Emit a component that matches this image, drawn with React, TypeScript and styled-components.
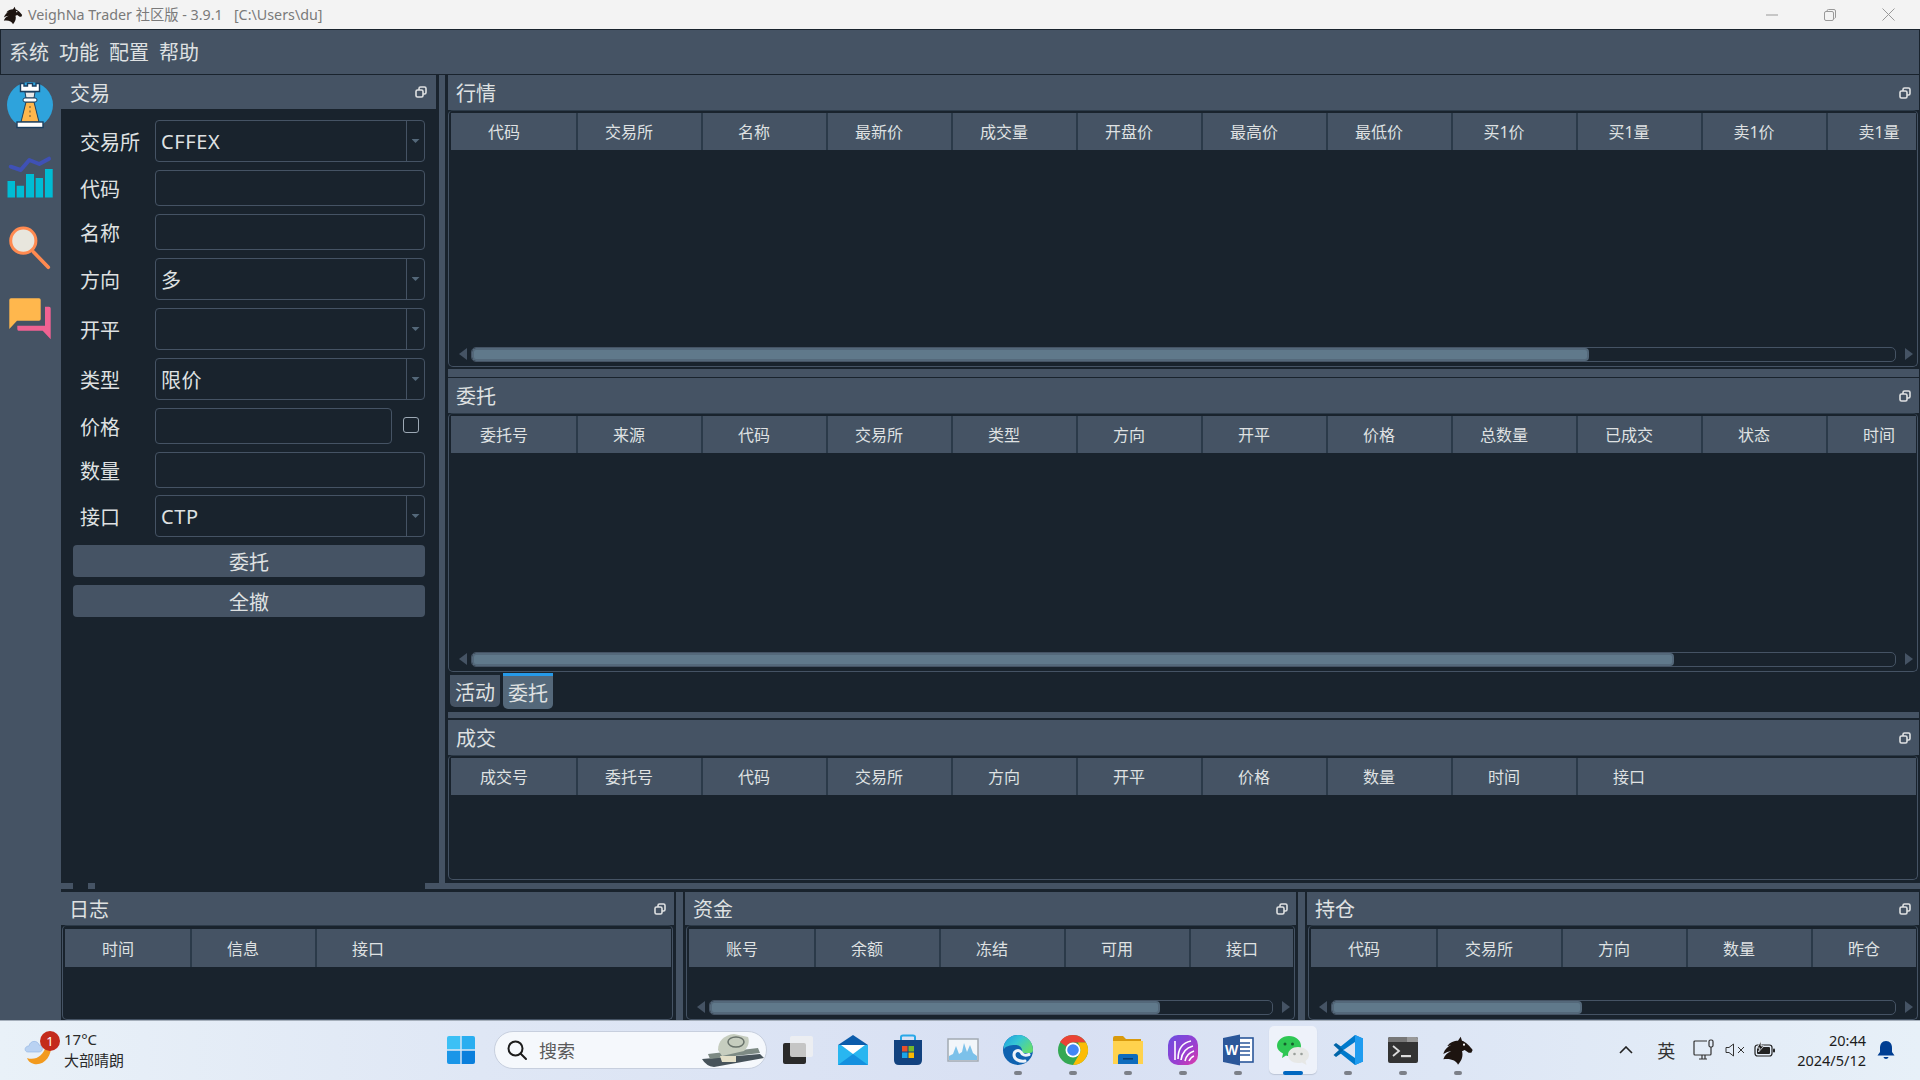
import { FC, ReactNode } from 'react';
import styled, { createGlobalStyle } from 'styled-components';

const colors = {
  dark: '#19232d',
  panel: '#455364',
  mid: '#54687a',
  thumb: '#60798b',
  text: '#dfe1e2',
  accent: '#259ae9',
};

const GlobalStyle = createGlobalStyle`
  html, body {
    margin: 0;
    padding: 0;
    background: ${colors.dark};
    overflow: hidden;
  }
  * {
    box-sizing: border-box;
  }
`;

const Page = styled.div`
  width: 1920px;
  height: 1080px;
  display: flex;
  flex-direction: column;
  overflow: hidden;
  font-family: 'Noto Sans', 'Noto Sans CJK SC', sans-serif;
  color: ${colors.text};
`;

/* window title */
const TitleBar = styled.div`
  flex: 0 0 29px;
  display: flex;
  align-items: center;
  background: #f3f3f3;
  padding-left: 3px;
  color: #7a7a7a;
  font-size: 14.3px;
`;

const TitleText = styled.span`
  margin: 0 0 2px 5px;
  white-space: pre;
`;

const WindowButtons = styled.div`
  margin-left: auto;
  display: flex;
  padding-right: 3px;
`;

const WindowButton = styled.div`
  width: 58px;
  height: 29px;
  display: flex;
  align-items: center;
  justify-content: center;
`;

/* menu */
const MenuBar = styled.div`
  flex: 0 0 46px;
  display: flex;
  align-items: center;
  gap: 10px;
  padding: 0 0 2px 8px;
  background: ${colors.panel};
  border: 1px solid ${colors.dark};
  font-size: 20px;
`;

const Body = styled.div`
  flex: 1;
  display: flex;
  min-height: 0;
`;

const ToolBar = styled.div`
  flex: 0 0 61px;
  display: flex;
  flex-direction: column;
  align-items: center;
  gap: 23px;
  padding: 6px 1px 0 0;
  background: ${colors.panel};
`;

const ToolButton = styled.div`
  width: 48px;
  height: 48px;
`;

const Center = styled.div`
  flex: 1;
  display: flex;
  flex-direction: column;
  min-width: 0;
`;

const TopRow = styled.div`
  flex: 1;
  display: flex;
  min-height: 0;
`;

const OrderDock = styled.div`
  flex: 0 0 375px;
  display: flex;
  flex-direction: column;
`;

const VSplit = styled.div`
  flex: 0 0 12px;
  border-left: 3px solid ${colors.dark};
  border-right: 3px solid ${colors.dark};
  background: ${colors.panel};
`;

const BottomVSplit = styled.div`
  flex: 0 0 11px;
  border-left: 2px solid ${colors.dark};
  border-right: 2px solid ${colors.dark};
  background: ${colors.panel};
`;

const RightColumn = styled.div`
  flex: 1;
  display: flex;
  flex-direction: column;
  min-width: 0;
  padding-right: 1px;
`;

const HSplit = styled.div<{ $top: number; $bottom: number }>`
  flex: 0 0 auto;
  height: 6px;
  margin-top: ${(p) => p.$top}px;
  margin-bottom: ${(p) => p.$bottom}px;
  background: ${colors.panel};
`;

const HSplitTall = styled(HSplit)`
  height: 8px;
`;

const MainHSplit = styled.div`
  flex: 0 0 6px;
  margin-bottom: 3px;
  background: linear-gradient(
    to right,
    ${colors.panel} 0 12px,
    ${colors.dark} 12px 27px,
    ${colors.panel} 27px 34px,
    ${colors.dark} 34px 364px,
    ${colors.panel} 364px
  );
`;

const BottomRow = styled.div`
  flex: 0 0 128px;
  display: flex;
`;

const DockRoot = styled.div<{ $height?: number; $width?: number }>`
  display: flex;
  flex-direction: column;
  min-width: 0;
  ${(p) => (p.$height ? `flex: 0 0 ${p.$height}px;` : '')}
  ${(p) => (p.$width ? `flex: 0 0 ${p.$width}px;` : '')}
`;

const DockTitle = styled.div<{ $height: number }>`
  flex: 0 0 ${(p) => p.$height}px;
  display: flex;
  align-items: center;
  justify-content: space-between;
  padding: 0 8px;
  background: ${colors.panel};
  font-size: 20px;
`;

const OrderTitle = styled(DockTitle)`
  padding: 0 9px;
`;

const DockFrame = styled.div<{ $inset: boolean }>`
  flex: 1;
  display: flex;
  flex-direction: column;
  min-height: 0;
  margin: ${(p) => (p.$inset ? '0 1px' : '0 1px 0 0')};
  padding: ${(p) => (p.$inset ? '3px' : '2px')} 1px 0 2px;
  border: 1px solid ${colors.panel};
  border-top-color: #2c3a48;
  border-radius: 5px;
  background: ${colors.dark};
`;

const TableHeader = styled.div<{ $height: number }>`
  flex: 0 0 ${(p) => p.$height}px;
  display: flex;
  overflow: hidden;
  padding-left: 2px;
  background: ${colors.panel};
  font-size: 16px;
`;

const HeaderCell = styled.div`
  flex: 0 0 125px;
  display: flex;
  align-items: center;
  justify-content: center;
  padding: 0 21px 1px 0;
  border-right: 2px solid #2b3a49;
  &:last-child {
    border-right-color: transparent;
  }
`;

const TableBody = styled.div`
  flex: 1;
`;

const ScrollRow = styled.div`
  flex: 0 0 20px;
  display: flex;
  align-items: center;
  margin-bottom: 2px;
  padding: 0 3px 0 8px;
`;

const Arrow = styled.div<{ $dir: 'left' | 'right' }>`
  flex: 0 0 8px;
  height: 12px;
  background: ${colors.panel};
  clip-path: ${(p) =>
    p.$dir === 'left' ? 'polygon(100% 0, 0 50%, 100% 100%)' : 'polygon(0 0, 100% 50%, 0 100%)'};
`;

const Track = styled.div`
  flex: 1;
  height: 15px;
  margin: 0 9px 0 4px;
  border: 1px solid ${colors.panel};
  border-radius: 5px;
  overflow: hidden;
`;

const Thumb = styled.div<{ $width: number }>`
  width: ${(p) => p.$width}%;
  height: 100%;
  border: 2px solid ${colors.mid};
  border-radius: 4px;
  background: ${colors.thumb};
`;

/* order form */
const Form = styled.div`
  flex: 1;
  display: flex;
  flex-direction: column;
  gap: 8px;
  padding: 11px 11px 0 12px;
`;

const FormRow = styled.div<{ $height: number; $pull?: boolean }>`
  flex: 0 0 ${(p) => p.$height}px;
  display: flex;
  align-items: center;
  margin-top: ${(p) => (p.$pull ? -1 : 0)}px;
`;

const Label = styled.div`
  flex: 0 0 82px;
  padding-left: 7px;
  font-size: 20px;
`;

const Field = styled.div`
  flex: 1;
  height: 100%;
  display: flex;
  align-items: center;
  padding-left: 5px;
  border: 1px solid ${colors.panel};
  border-radius: 4px;
  font-size: 20px;
  letter-spacing: 0.6px;
`;

const ComboArrow = styled.div`
  margin-left: auto;
  flex: 0 0 18px;
  height: 100%;
  display: flex;
  align-items: center;
  justify-content: center;
  border-left: 1px solid ${colors.panel};
  &::after {
    content: '';
    width: 8px;
    height: 4px;
    background: ${colors.mid};
    clip-path: polygon(0 0, 100% 0, 50% 100%);
  }
`;

const CheckBox = styled.div`
  flex: 0 0 16px;
  height: 16px;
  margin: 0 6px 2px 11px;
  border: 1px solid #9da9b5;
  border-radius: 3px;
`;

const ActionButton = styled.div<{ $height: number }>`
  flex: 0 0 ${(p) => p.$height}px;
  display: flex;
  align-items: center;
  justify-content: center;
  border-radius: 4px;
  background: ${colors.panel};
  font-size: 20px;
`;

/* tabs between the order and trade docks */
const TabBar = styled.div`
  flex: 0 0 40px;
  display: flex;
  align-items: flex-start;
  gap: 3px;
  padding-left: 2px;
`;

const Tab = styled.div<{ $active?: boolean }>`
  width: 50px;
  height: ${(p) => (p.$active ? 36 : 32)}px;
  margin-top: ${(p) => (p.$active ? 1 : 3)}px;
  display: flex;
  align-items: center;
  justify-content: center;
  border-top: ${(p) => (p.$active ? `3px solid ${colors.accent}` : 'none')};
  border-radius: 0 0 5px 5px;
  background: ${(p) => (p.$active ? colors.mid : colors.panel)};
  font-size: 20px;
`;

/* taskbar */
const TaskBar = styled.div`
  flex: 0 0 60px;
  display: flex;
  align-items: center;
  padding-bottom: 2px;
  border-top: 1px solid #a5afbb;
  background: linear-gradient(to right, #e9f1f8 0%, #dfe7f5 25%, #d8e0f3 55%, #dde6f5 75%, #e7f0f8 100%);
  color: #1c1c1c;
`;

const Weather = styled.div`
  flex: 0 0 437px;
  display: flex;
  align-items: center;
  padding-left: 24px;
`;

const WeatherIcon = styled.div`
  position: relative;
  width: 30px;
  height: 40px;
  display: flex;
  align-items: flex-end;
`;

const Badge = styled.div`
  position: absolute;
  top: 1px;
  right: -6px;
  width: 20px;
  height: 20px;
  display: flex;
  align-items: center;
  justify-content: center;
  border-radius: 50%;
  background: #c42b1c;
  color: #fff;
  font-size: 13px;
`;

const WeatherText = styled.div`
  margin-left: 10px;
  font-size: 15px;
  line-height: 21px;
  color: #2a2a2a;
`;

const Apps = styled.div`
  display: flex;
  align-items: center;
  gap: 7px;
`;

const SearchBox = styled.div`
  width: 273px;
  height: 38px;
  margin: 0 0 0 2px;
  display: flex;
  align-items: center;
  padding-left: 11px;
  border: 1px solid #c7cfde;
  border-radius: 19px;
  background: #f5f8fc;
  color: #5a5a5a;
  font-size: 18px;
`;

const SearchLabel = styled.span`
  margin-left: 11px;
`;

const SearchArt = styled.div`
  margin-left: auto;
  display: flex;
`;

const AppButton = styled.div<{ $active?: boolean }>`
  position: relative;
  flex: 0 0 48px;
  height: 48px;
  display: flex;
  align-items: center;
  justify-content: center;
  border-radius: 5px;
  background: ${(p) => (p.$active ? '#eef2fa' : 'transparent')};
  box-shadow: ${(p) => (p.$active ? '0 1px 1px #bcc5d6' : 'none')};
`;

const RunDot = styled.div<{ $active?: boolean }>`
  position: absolute;
  bottom: -1px;
  left: 50%;
  width: ${(p) => (p.$active ? 20 : 8)}px;
  height: 4px;
  transform: translateX(-50%);
  border-radius: 2px;
  background: ${(p) => (p.$active ? '#0067c0' : '#7c8088')};
`;

const Tray = styled.div`
  margin-left: auto;
  display: flex;
  align-items: center;
  padding-right: 25px;
`;

const TrayItem = styled.div<{ $width: number }>`
  flex: 0 0 ${(p) => p.$width}px;
  display: flex;
  justify-content: center;
  font-size: 18px;
  color: #333;
`;

const Clock = styled.div`
  margin: 0 11px 0 15px;
  text-align: right;
  font-size: 14.5px;
  line-height: 20px;
  color: #1c1c1c;
`;

/* drawings */
const FloatIcon = () => (
  <svg width="12" height="12" viewBox="0 0 12 12" fill="none" stroke={colors.text} strokeWidth="1.6">
    <rect x="4" y="1" width="7" height="7" rx="1.5" />
    <rect x="1" y="4" width="7" height="7" rx="1.5" fill={colors.panel} />
  </svg>
);

const HorseLogo: FC<{ size: number }> = ({ size }) => (
  <svg width={size} height={size} viewBox="0 0 24 24">
    <path
      fill="#1d1410"
      d="M1 19 C2 16 4 14 7 13 C5 13 3 14 1 15 C2 11 5 9 7 8 C6 8 5 9 4 9 C6 6 9 5 12 5 L14 2 L15 5 C18 6 21 9 23 12 L22 14 L20 14 L17 12 L15 13 C16 16 15 20 12 23 C11 20 6 18 1 19Z"
    />
    <circle cx="16.500" cy="8" r="0.800" fill="#fff" />
  </svg>
);

const RookIcon = () => (
  <svg width="48" height="48" viewBox="0 0 48 48">
    <circle cx="24" cy="24" r="23" fill="#2ea3dc" />
    <path fill="#ffb74d" stroke="#1c3f5f" d="M20 21 L15 41 H33 L28 21Z" />
    <path fill="#e9e9e9" stroke="#1c3f5f" d="M19 11 H29 L28 17 H20Z" />
    <path fill="#fff" stroke="#1c3f5f" strokeWidth="1.4" d="M14.5 2.5 H18 V5 H21.5 V2.5 H26.5 V5 H30 V2.5 H33.5 V10.5 H14.5Z" />
    <rect x="17" y="17" width="14" height="4" rx="2" fill="#fff" stroke="#1c3f5f" />
    <rect x="11" y="41" width="26" height="5.5" fill="#fff" stroke="#1c3f5f" strokeWidth="1.4" />
    <path stroke="#8d6e3f" strokeWidth="1.4" d="M24 25 V27 M24 29.5 V31.5 M24 34 V36" />
  </svg>
);

const ChartIcon = () => (
  <svg width="48" height="48" viewBox="0 0 48 48">
    <path fill="#00bcd4" d="M1.5 29 H9 V45.5 H1.5Z M10.7 33.7 H18 V45.5 H10.7Z M20 22 H28 V45.5 H20Z M29.7 26 H37 V45.5 H29.7Z M39 17 H46.7 V45.5 H39Z" />
    <path fill="none" stroke="#3f51b5" strokeWidth="4" strokeLinecap="round" strokeLinejoin="round" d="M4.7 14.7 L14.7 18 L23.3 8 L33.3 12 L43 6.7" />
  </svg>
);

const SearchToolIcon = () => (
  <svg width="48" height="48" viewBox="0 0 48 48">
    <path stroke="#ff8a50" strokeWidth="3.6" strokeLinecap="round" d="M27.5 29 L42.3 44.3" />
    <circle cx="17.3" cy="17.7" r="12.6" fill="#e8e6dd" stroke="#ff8a50" strokeWidth="3" />
  </svg>
);

const ChatIcon = () => (
  <svg width="48" height="48" viewBox="0 0 48 48">
    <path fill="#f06292" d="M39 12.7 H43 Q44.7 12.7 44.7 14.5 V45.3 L36.7 36.7 H12.5 Q11.3 36.7 11.3 35 V31.7 H39Z" />
    <path fill="#ffb74d" d="M5 4.3 H33 Q34.7 4.3 34.7 6 V25 Q34.7 26.7 33 26.7 H11 L3.3 35 V6 Q3.3 4.3 5 4.3Z" />
  </svg>
);

const WeatherArt = () => (
  <svg width="30" height="36" viewBox="0 0 30 36">
    <path fill="#f29a1e" d="M27 11 C28 22 20 32 10 30 C6 29 4 27 3 24 C11 27 20 22 22 11 Z" />
    <path fill="#b9d2f2" stroke="#8fb1e0" strokeWidth="0.6" d="M4 18 C0 18 0 12 5 12 C6 6 14 6 15 11 C19 11 20 18 15 18Z" />
  </svg>
);

const WinLogo = () => (
  <svg width="30" height="30" viewBox="0 0 30 30">
    <path fill="#3cc0f5" d="M1 3 Q1 1 3 1 H14.3 V14.3 H1Z" />
    <path fill="#2aaef0" d="M15.7 1 H27 Q29 1 29 3 V14.3 H15.7Z" />
    <path fill="#1a96e8" d="M1 15.7 H14.3 V29 H3 Q1 29 1 27Z" />
    <path fill="#0a7fdc" d="M15.7 15.7 H29 V27 Q29 29 27 29 H15.7Z" />
  </svg>
);

const SearchGlass = () => (
  <svg width="22" height="22" viewBox="0 0 22 22" fill="none" stroke="#1c1c1c" strokeWidth="2">
    <circle cx="9.5" cy="9.5" r="7" />
    <path d="M14.5 14.5 L20 20" strokeLinecap="round" />
  </svg>
);

const BookArt = () => (
  <svg width="66" height="36" viewBox="0 0 66 36">
    <path fill="#47535a" d="M2 27 L60 22 L64 26 L14 35 Q6 34 2 27Z" />
    <path fill="#7d8a84" d="M8 22 L58 16 L60 21 L10 27Z" />
    <path fill="#c6cdbf" d="M18 18 C18 9 24 3 34 2 L48 5 C50 10 48 15 44 19 L22 24Z" />
    <ellipse cx="36" cy="10" rx="8" ry="5" fill="none" stroke="#68726b" strokeWidth="1.5" />
    <path fill="#e3dfc8" d="M20 24 H36 V30 H22Z" />
  </svg>
);

const TaskViewIcon = () => (
  <svg width="32" height="32" viewBox="0 0 32 32">
    <rect x="1" y="9" width="23" height="21" rx="2" fill="#2a2a2a" />
    <rect x="8" y="2" width="23" height="21" rx="2" fill="#f1f1f1" fillOpacity="0.78" />
  </svg>
);

const MailIcon = () => (
  <svg width="32" height="32" viewBox="0 0 32 32">
    <path fill="#0b5cab" d="M1 11 L16 1 L31 11Z" />
    <path fill="#29b6f0" d="M1 11 H31 V31 H1Z" />
    <path fill="#1490df" d="M1 31 L16 20 L31 31Z" />
    <path fill="#fff" d="M4 11 H28 L16 20Z" />
  </svg>
);

const StoreIcon = () => (
  <svg width="32" height="32" viewBox="0 0 32 32">
    <path fill="none" stroke="#29a8e8" strokeWidth="2" d="M9 8 V3 Q9 1.5 11 1.5 H21 Q23 1.5 23 3 V8" />
    <path fill="#12427f" d="M2 6 H30 V26 Q30 31 25 31 H7 Q2 31 2 26Z" />
    <rect x="10" y="12" width="5.5" height="5.5" fill="#e8502a" />
    <rect x="16.5" y="12" width="5.5" height="5.5" fill="#76b82a" />
    <rect x="10" y="18.5" width="5.5" height="5.5" fill="#1aa5e8" />
    <rect x="16.5" y="18.5" width="5.5" height="5.5" fill="#fbb900" />
  </svg>
);

const MonitorIcon = () => (
  <svg width="32" height="32" viewBox="0 0 32 32">
    <rect x="1" y="5" width="30" height="22" fill="#f2f6fa" stroke="#a3aab3" strokeWidth="1.5" />
    <path fill="#7cc1ea" d="M2 22 L6 20 L9 12 L12 20 L15 18 L17 9 L20 18 L23 11 L26 19 L30 22 V26 H2Z" />
  </svg>
);

const EdgeIcon = () => (
  <svg width="32" height="32" viewBox="0 0 32 32">
    <defs>
      <linearGradient id="edgeTop" x1="0" y1="0" x2="1" y2="0.6">
        <stop offset="0" stopColor="#1d9ce0" />
        <stop offset="0.5" stopColor="#35c6d4" />
        <stop offset="1" stopColor="#62dc74" />
      </linearGradient>
    </defs>
    <circle cx="16" cy="16" r="15" fill="#0f62b0" />
    <path fill="url(#edgeTop)" d="M2 11 C5 4 10 1 16 1 C25 1 31 8 31 16 C31 18 30 19 28 19 L20 19 C21 14 18 11 13 11 C8 11 4 12 2 15Z" />
    <path fill="none" stroke="#eef3fa" strokeWidth="3" strokeLinecap="round" d="M27 20.500 C23 22 20 21 19 18 C16 15 12 17 12 21 C12 25 17 28 23 27" />
  </svg>
);

const ChromeIcon = () => (
  <svg width="32" height="32" viewBox="0 0 32 32">
    <circle cx="16" cy="16" r="15" fill="#34a853" />
    <path fill="#ea4335" d="M16 1 A15 15 0 0 1 29 8.5 H16 A7.5 7.5 0 0 0 9.3 12.6 L3 8 A15 15 0 0 1 16 1Z" />
    <path fill="#fbbc05" d="M29 8.5 A15 15 0 0 1 16 31 L22.5 19.7 A7.5 7.5 0 0 0 22.5 12.2 L21 8.5Z" />
    <circle cx="16" cy="16" r="7.5" fill="#fff" />
    <circle cx="16" cy="16" r="5.8" fill="#4285f4" />
  </svg>
);

const FolderIcon = () => (
  <svg width="32" height="32" viewBox="0 0 32 32">
    <path fill="#d99a0c" d="M1 4 Q1 2 3 2 H11 L14 5 H29 V12 H1Z" />
    <path fill="#ffd24d" d="M1 7 H31 V30 H1Z" />
    <path fill="#0f6cbd" d="M6 22 Q6 20 8 20 H24 Q26 20 26 22 V30 H6Z" />
    <rect x="11" y="24" width="10" height="1.6" fill="#0a3f73" />
  </svg>
);

const FeatherIcon = () => (
  <svg width="32" height="32" viewBox="0 0 32 32">
    <defs>
      <linearGradient id="featherFill" x1="0" y1="0" x2="1" y2="1">
        <stop offset="0" stopColor="#6a4de0" />
        <stop offset="0.6" stopColor="#9a3fd0" />
        <stop offset="1" stopColor="#e23aa8" />
      </linearGradient>
    </defs>
    <rect x="1" y="1" width="30" height="30" rx="10" fill="url(#featherFill)" />
    <path fill="none" stroke="#fff" strokeWidth="1.6" d="M8 7 V26 M11 25 C11 16 14 9 24 7 M14 26 C15 19 18 14 26 12 M18 27 C19 22 21 19 27 17 M22 27 C23 25 24 23 27 22" />
  </svg>
);

const WordIcon = () => (
  <svg width="32" height="32" viewBox="0 0 32 32">
    <rect x="14" y="4" width="17" height="24" fill="#fff" stroke="#2b579a" strokeWidth="1.6" />
    <path stroke="#2b579a" strokeWidth="1.6" d="M18 9 H28 M18 13 H28 M18 17 H28 M18 21 H28" />
    <path fill="#2b579a" d="M1 4 L18 0.5 V31.5 L1 28Z" />
    <text x="3" y="21" fill="#fff" fontSize="14" fontWeight="700" fontFamily="'Liberation Sans', sans-serif">W</text>
  </svg>
);

const WeChatIcon = () => (
  <svg width="32" height="32" viewBox="0 0 32 32">
    <path fill="#2ec754" d="M12 2 C19 2 24 6.500 24 12 C24 17.500 19 22 12 22 C11 22 10 22 9 21.500 L5 24 L6 19.500 C2.500 17.500 0 15 0 12 C0 6.500 5 2 12 2Z" />
    <circle cx="8" cy="10" r="1.5" fill="#155f2d" />
    <circle cx="15.500" cy="10" r="1.5" fill="#155f2d" />
    <path fill="#e7e8e6" d="M21 13 C27 13 32 16.500 32 21 C32 23.500 30.500 25.500 28.500 27 L29.500 31 L25 28.500 C24 29 22.500 29 21 29 C15.500 29 11 25.500 11 21 C11 16.500 15.500 13 21 13Z" />
    <circle cx="17.500" cy="20" r="1.300" fill="#9aa09b" />
    <circle cx="24.500" cy="20" r="1.300" fill="#9aa09b" />
  </svg>
);

const CodeIcon = () => (
  <svg width="32" height="32" viewBox="0 0 32 32">
    <path fill="#0065a9" d="M1.500 11 L4 9 L11 14 L11 18 L4 23 L1.500 21 L7 16Z" />
    <path fill="#007acc" d="M23 1 L31 4.500 V27.500 L23 31 L8 19 L11.500 16 L23 24 V8 L11.500 16 L8 13Z" />
    <path fill="#1f9cf0" d="M23 1 L31 4.500 V27.500 L23 31Z" />
  </svg>
);

const TerminalIcon = () => (
  <svg width="32" height="32" viewBox="0 0 32 32">
    <rect x="1" y="3" width="30" height="26" rx="2" fill="#333" />
    <path fill="#777" d="M1 5 Q1 3 3 3 H20 V8 H1Z" />
    <path fill="#999" d="M20 3 H29 Q31 3 31 5 V8 H20Z" />
    <path fill="none" stroke="#dcdcdc" strokeWidth="1.800" d="M6 12 L12 17 L6 22" />
    <rect x="14" y="21" width="10" height="2.200" fill="#dcdcdc" />
  </svg>
);

const ChevronUp = () => (
  <svg width="14" height="8" viewBox="0 0 14 8" fill="none" stroke="#222" strokeWidth="1.600">
    <path d="M1 7 L7 1 L13 7" />
  </svg>
);

const NetworkIcon = () => (
  <svg width="22" height="22" viewBox="0 0 22 22" fill="none" stroke="#333" strokeWidth="1.200">
    <path d="M14 2 H2 Q1 2 1 3 V15 Q1 16 2 16 H17 Q18 16 18 15 V11" />
    <rect x="16" y="1" width="4" height="7" rx="1.500" />
    <path d="M18 8 V11 M6 20 H14 M9 16 V20 M12 16 V20" />
  </svg>
);

const VolumeIcon = () => (
  <svg width="20" height="14" viewBox="0 0 20 14" fill="none" stroke="#333" strokeWidth="1">
    <path d="M1 4.500 H4 L8.500 1 V13 L4 9.500 H1Z" />
    <path d="M13 4 L19 10 M19 4 L13 10" />
  </svg>
);

const BatteryIcon = () => (
  <svg width="22" height="18" viewBox="0 0 22 18">
    <rect x="1" y="4" width="17" height="11" rx="2.500" fill="none" stroke="#222" strokeWidth="1.200" />
    <rect x="3" y="6" width="13" height="7" rx="1" fill="#222" />
    <rect x="19" y="7.500" width="2" height="4" rx="1" fill="#222" />
    <path fill="#222" stroke="#f0f4fa" strokeWidth="0.800" d="M7 0 L3 7 H6 L4.500 11 L10 5 H7Z" />
  </svg>
);

const BellIcon = () => (
  <svg width="18" height="20" viewBox="0 0 18 20">
    <path fill="#003e92" d="M9 1 C13 1 15 4 15 8 V12 L17.500 15.500 H0.500 L3 12 V8 C3 4 5 1 9 1Z" />
    <path fill="#003e92" d="M6.500 17 H11.500 C11 19.500 7 19.500 6.500 17Z" />
  </svg>
);

/* panels */
const Dock: FC<{
  title: string;
  titleHeight?: number;
  height?: number;
  width?: number;
  inset?: boolean;
  children: ReactNode;
}> = ({ title, titleHeight = 35, height, width, inset = false, children }) => (
  <DockRoot $height={height} $width={width}>
    <DockTitle $height={titleHeight}>
      {title}
      <FloatIcon />
    </DockTitle>
    <DockFrame $inset={inset}>{children}</DockFrame>
  </DockRoot>
);

const Table: FC<{ columns: string[]; thumb?: number; headerHeight?: number }> = ({
  columns,
  thumb,
  headerHeight = 37,
}) => (
  <>
    <TableHeader $height={headerHeight}>
      {columns.map((c) => (
        <HeaderCell key={c}>{c}</HeaderCell>
      ))}
    </TableHeader>
    <TableBody />
    {thumb ? (
      <ScrollRow>
        <Arrow $dir="left" />
        <Track>
          <Thumb $width={thumb} />
        </Track>
        <Arrow $dir="right" />
      </ScrollRow>
    ) : null}
  </>
);

const Combo: FC<{ label: string; value?: string; pull?: boolean }> = ({ label, value, pull }) => (
  <FormRow $height={42} $pull={pull}>
    <Label>{label}</Label>
    <Field>
      {value}
      <ComboArrow />
    </Field>
  </FormRow>
);

const Input: FC<{ label: string }> = ({ label }) => (
  <FormRow $height={36}>
    <Label>{label}</Label>
    <Field />
  </FormRow>
);

const tickColumns = ['代码', '交易所', '名称', '最新价', '成交量', '开盘价', '最高价', '最低价', '买1价', '买1量', '卖1价', '卖1量'];
const orderColumns = ['委托号', '来源', '代码', '交易所', '类型', '方向', '开平', '价格', '总数量', '已成交', '状态', '时间'];
const tradeColumns = ['成交号', '委托号', '代码', '交易所', '方向', '开平', '价格', '数量', '时间', '接口'];

const apps = [
  <TaskViewIcon key="task" />,
  <MailIcon key="mail" />,
  <StoreIcon key="store" />,
  <MonitorIcon key="monitor" />,
  <EdgeIcon key="edge" />,
  <ChromeIcon key="chrome" />,
  <FolderIcon key="folder" />,
  <FeatherIcon key="feather" />,
  <WordIcon key="word" />,
  <WeChatIcon key="wechat" />,
  <CodeIcon key="code" />,
  <TerminalIcon key="terminal" />,
  <HorseLogo key="horse" size={32} />,
];
const runningFrom = 4;
const activeApp = 9;

export default function App() {
  return (
    <Page>
      <GlobalStyle />
      <TitleBar>
        <HorseLogo size={20} />
        <TitleText>VeighNa Trader 社区版 - 3.9.1   [C:\Users\du]</TitleText>
        <WindowButtons>
          <WindowButton>
            <svg width="12" height="2" viewBox="0 0 12 2">
              <path d="M0 1 H12" stroke="#999" />
            </svg>
          </WindowButton>
          <WindowButton>
            <svg width="12" height="12" viewBox="0 0 12 12" fill="none" stroke="#999">
              <path d="M3 2 Q3 0.500 4.500 0.500 H10 Q11.500 0.500 11.500 2 V8 Q11.500 9 10.500 9.500" />
              <rect x="0.500" y="2.500" width="9" height="9" rx="1.500" />
            </svg>
          </WindowButton>
          <WindowButton>
            <svg width="13" height="13" viewBox="0 0 13 13" stroke="#999">
              <path d="M0.500 0.500 L12.500 12.500 M12.500 0.500 L0.500 12.500" />
            </svg>
          </WindowButton>
        </WindowButtons>
      </TitleBar>
      <MenuBar>
        <span>系统</span>
        <span>功能</span>
        <span>配置</span>
        <span>帮助</span>
      </MenuBar>
      <Body>
        <ToolBar>
          <ToolButton>
            <RookIcon />
          </ToolButton>
          <ToolButton>
            <ChartIcon />
          </ToolButton>
          <ToolButton>
            <SearchToolIcon />
          </ToolButton>
          <ToolButton>
            <ChatIcon />
          </ToolButton>
        </ToolBar>
        <Center>
          <TopRow>
            <OrderDock>
              <OrderTitle $height={34}>
                交易
                <FloatIcon />
              </OrderTitle>
              <Form>
                <Combo label="交易所" value="CFFEX" />
                <Input label="代码" />
                <Input label="名称" />
                <Combo label="方向" value="多" />
                <Combo label="开平" />
                <Combo label="类型" value="限价" />
                <FormRow $height={36}>
                  <Label>价格</Label>
                  <Field />
                  <CheckBox />
                </FormRow>
                <Input label="数量" />
                <Combo label="接口" value="CTP" pull />
                <ActionButton $height={32}>委托</ActionButton>
                <ActionButton $height={32}>全撤</ActionButton>
              </Form>
            </OrderDock>
            <VSplit />
            <RightColumn>
              <Dock title="行情" height={292}>
                <Table columns={tickColumns} thumb={78.5} />
              </Dock>
              <HSplitTall $top={2} $bottom={1} />
              <Dock title="委托" height={294}>
                <Table columns={orderColumns} thumb={84.5} />
              </Dock>
              <TabBar>
                <Tab>活动</Tab>
                <Tab $active>委托</Tab>
              </TabBar>
              <HSplit $top={0} $bottom={2} />
              <Dock title="成交" height={160}>
                <Table columns={tradeColumns} />
              </Dock>
            </RightColumn>
          </TopRow>
          <MainHSplit />
          <BottomRow>
            <Dock title="日志" titleHeight={33} width={613} inset>
              <Table columns={['时间', '信息', '接口']} headerHeight={38} />
            </Dock>
            <BottomVSplit />
            <Dock title="资金" titleHeight={33} width={611} inset>
              <Table columns={['账号', '余额', '冻结', '可用', '接口']} thumb={80} headerHeight={38} />
            </Dock>
            <BottomVSplit />
            <Dock title="持仓" titleHeight={33} width={612} inset>
              <Table columns={['代码', '交易所', '方向', '数量', '昨仓']} thumb={44.4} headerHeight={38} />
            </Dock>
          </BottomRow>
        </Center>
      </Body>
      <TaskBar>
        <Weather>
          <WeatherIcon>
            <WeatherArt />
            <Badge>1</Badge>
          </WeatherIcon>
          <WeatherText>
            17°C
            <br />
            大部晴朗
          </WeatherText>
        </Weather>
        <Apps>
          <AppButton>
            <WinLogo />
          </AppButton>
          <SearchBox>
            <SearchGlass />
            <SearchLabel>搜索</SearchLabel>
            <SearchArt>
              <BookArt />
            </SearchArt>
          </SearchBox>
          {apps.map((icon, i) => (
            <AppButton key={i} $active={i === activeApp}>
              {icon}
              {i >= runningFrom ? <RunDot $active={i === activeApp} /> : null}
            </AppButton>
          ))}
        </Apps>
        <Tray>
          <TrayItem $width={40}>
            <ChevronUp />
          </TrayItem>
          <TrayItem $width={40}>英</TrayItem>
          <TrayItem $width={36}>
            <NetworkIcon />
          </TrayItem>
          <TrayItem $width={26}>
            <VolumeIcon />
          </TrayItem>
          <TrayItem $width={34}>
            <BatteryIcon />
          </TrayItem>
          <Clock>
            20:44
            <br />
            2024/5/12
          </Clock>
          <BellIcon />
        </Tray>
      </TaskBar>
    </Page>
  );
}
